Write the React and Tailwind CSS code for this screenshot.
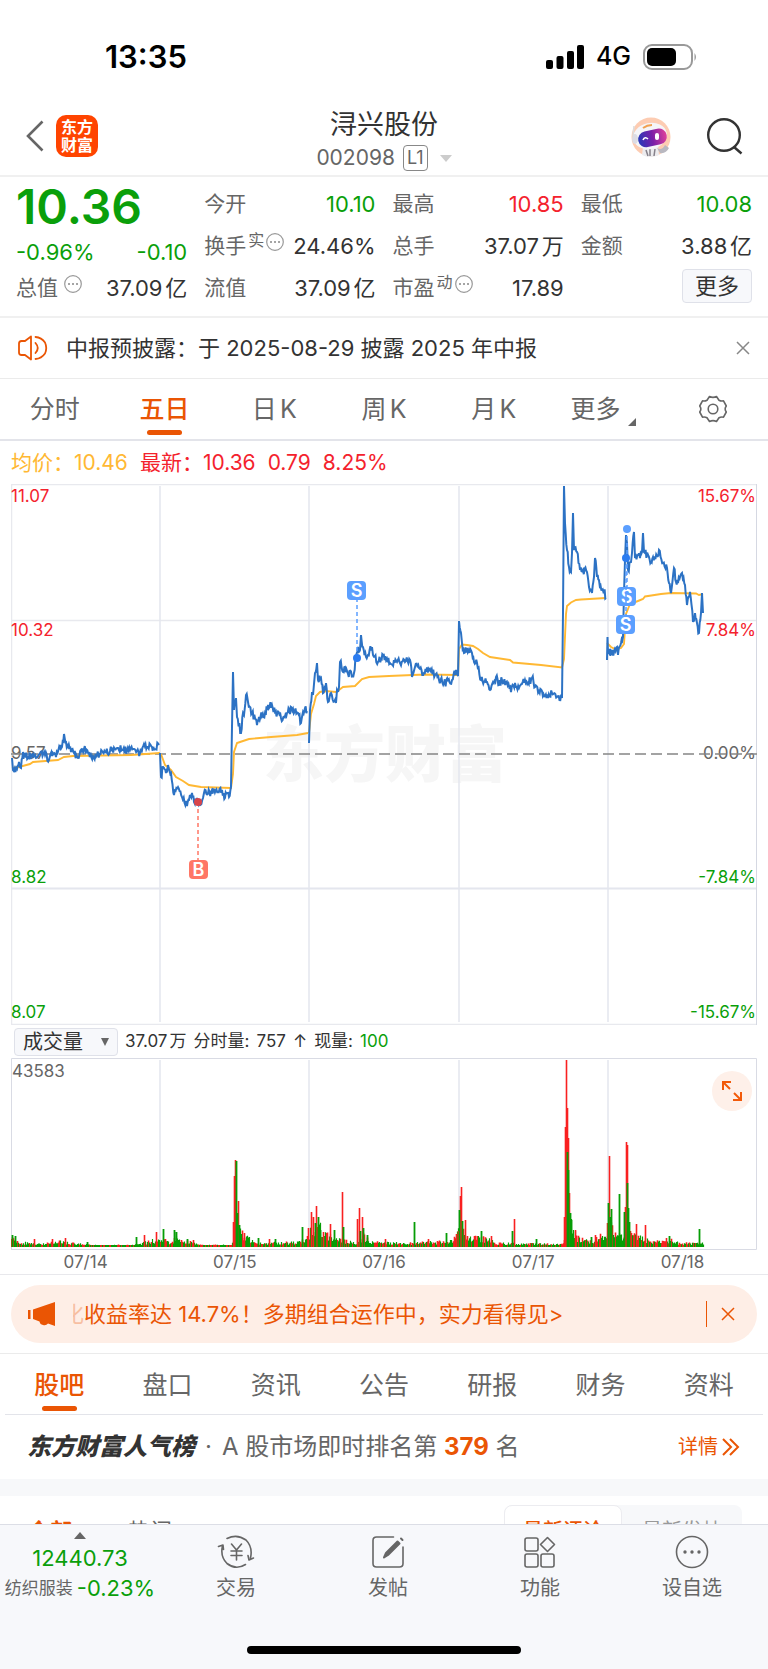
import React, { useState } from 'react';

const periods = ['分时', '五日', '日K', '周K', '月K', '更多'];
const sections = ['股吧', '盘口', '资讯', '公告', '研报', '财务', '资料'];

// price per trading day, [x, y] in chart units
const priceDays = [
    [[1, 274], [2, 286], [6, 285], [8, 278], [10, 284], [12, 268], [17, 274], [22, 269], [25, 274], [29, 269], [34, 271], [38, 276], [42, 269], [45, 273], [49, 264], [51, 263], [53, 250], [55, 258], [57, 263], [60, 268], [63, 269], [67, 274], [73, 265], [78, 269], [82, 272], [86, 271], [91, 267], [99, 267], [107, 264], [116, 267], [122, 265], [129, 269], [133, 260], [136, 263], [141, 263], [143, 265], [148, 261]],
    [[149, 269], [150, 293], [152, 283], [155, 289], [157, 281], [160, 289], [163, 311], [167, 303], [171, 313], [176, 322], [178, 316], [181, 309], [183, 318], [186, 314], [188, 321], [192, 314], [193, 309], [200, 308], [207, 308], [211, 306], [214, 314], [216, 309], [218, 313], [220, 303], [221, 243], [222, 188], [223, 226], [225, 214], [226, 233], [230, 249], [232, 229], [233, 231], [235, 211], [237, 218], [241, 229], [244, 234], [246, 241], [248, 233], [254, 229], [257, 221], [261, 221], [264, 228], [270, 234], [276, 229], [282, 225], [287, 229], [290, 239], [292, 228], [294, 224], [296, 227]],
    [[298, 259], [299, 226], [301, 208], [302, 211], [304, 189], [306, 179], [307, 196], [310, 194], [312, 209], [315, 199], [317, 218], [320, 209], [325, 219], [326, 206], [328, 203], [329, 178], [332, 188], [334, 183], [337, 190], [343, 189], [345, 173], [347, 163], [349, 166], [350, 151], [352, 163], [355, 173], [357, 171], [361, 163], [362, 171], [367, 178], [370, 175], [372, 171], [379, 179], [386, 178], [394, 178], [399, 176], [401, 193], [404, 183], [408, 184], [413, 189], [419, 185], [424, 191], [428, 196], [433, 199], [441, 196], [445, 186], [447, 192], [448, 137], [450, 149], [451, 159], [453, 169], [456, 164], [461, 169], [463, 178], [466, 179], [470, 196], [476, 198], [479, 206], [482, 198], [485, 193], [488, 201], [491, 196], [495, 198], [500, 208], [504, 199], [508, 204], [514, 196], [517, 199], [521, 194], [524, 203], [531, 207], [537, 214], [541, 209], [546, 213], [551, 214], [552, 129], [553, 2], [554, 39], [556, 66], [558, 83], [560, 88], [561, 69], [562, 29], [563, 66], [566, 68], [569, 86], [572, 86], [576, 88], [578, 103], [581, 109], [583, 93], [584, 74], [586, 93], [588, 96], [591, 106], [593, 106], [595, 114]],
    [[596, 176], [596.5, 153], [597, 168], [601, 169], [603, 168], [606, 163], [607, 171], [610, 159], [612, 153], [613, 109], [614, 76], [615, 51], [616, 59], [617, 86], [620, 78], [621, 69], [623, 48], [624, 74], [627, 71], [629, 74], [631, 68], [632, 49], [633, 68], [637, 71], [640, 78], [642, 73], [646, 72], [648, 66], [652, 79], [656, 84], [658, 99], [660, 109], [663, 84], [665, 98], [667, 99], [671, 89], [674, 101], [676, 121], [679, 108], [682, 138], [684, 129], [686, 139], [688, 149], [690, 129], [691, 109], [692, 129]],
];

const averageDays = [
    [[1, 284], [8, 283], [19, 280], [22, 278], [47, 276], [53, 273], [62, 272], [120, 271], [149, 269]],
    [[150, 270], [154, 281], [160, 286], [165, 293], [172, 297], [178, 301], [190, 303], [220, 304], [222, 290], [223, 268], [226, 259], [229, 258], [238, 255], [260, 253], [286, 251], [297, 249]],
    [[298, 249], [300, 230], [303, 220], [305, 212], [309, 208], [314, 207], [325, 208], [328, 206], [332, 203], [344, 202], [351, 195], [358, 193], [378, 192], [414, 190.5], [447, 191], [448, 165], [451, 160.5], [456, 161], [462, 162], [467, 165], [472, 169], [479, 173], [499, 176], [502, 178.5], [530, 181], [551, 183.5], [553, 175], [555, 130], [556, 122], [560, 118.5], [565, 116], [570, 115.5], [595, 114]],
    [[596, 159], [600, 163], [605, 165.5], [610, 164], [613, 160], [615, 130], [619, 120], [627, 117], [632, 115], [634, 112.5], [650, 110], [660, 109], [685, 109.5], [688, 111], [692, 110]],
];

// everyday volume level, and the bars which stand out of it
const volumeLevel = [[0, 9], [10, 5], [30, 3], [50, 6], [60, 4], [80, 2], [120, 2], [130, 4], [150, 9], [158, 5], [165, 9], [180, 5], [195, 2], [220, 2], [228, 18], [236, 10], [244, 4], [290, 5], [300, 18], [308, 22], [314, 13], [330, 7], [345, 5], [352, 12], [358, 6], [380, 4], [440, 6], [450, 20], [458, 10], [475, 9], [485, 4], [551, 3], [560, 25], [566, 10], [580, 6], [594, 14], [600, 25], [606, 12], [613, 14], [618, 22], [624, 12], [640, 6], [660, 7], [668, 4], [693, 4]];
const volumePeaks = [
    [1, 12, 'g'], [4, 11, 'g'], [23, 8, 'r'], [41, 8, 'r'], [54, 9, 'r'], [76, 5, 'g'], [125, 10, 'g'], [133, 12, 'r'], [145, 15, 'r'], [152, 18, 'g'], [163, 17, 'g'], [165, 15, 'g'], [176, 8, 'g'], [182, 7, 'r'],
    [222, 25, 'r'], [223, 71, 'r'], [224, 87, 'r'], [225, 86, 'g'], [226, 34, 'g'], [227, 46, 'r'], [228, 22, 'g'], [233, 14, 'r'], [247, 9, 'g'], [258, 8, 'r'], [264, 8, 'g'],
    [291, 20, 'g'], [297, 19, 'r'], [300, 35, 'r'], [302, 30, 'r'], [304, 24, 'g'], [305, 41, 'r'], [307, 30, 'g'], [309, 17, 'g'], [312, 15, 'r'], [319, 23, 'r'], [323, 17, 'g'], [331, 55, 'r'], [332, 20, 'g'], [346, 28, 'r'], [348, 39, 'r'], [349, 16, 'g'], [351, 30, 'r'], [352, 19, 'g'], [356, 12, 'g'],
    [374, 8, 'r'], [403, 25, 'g'], [417, 8, 'r'], [435, 14, 'g'], [445, 13, 'r'], [447, 16, 'r'], [449, 51, 'r'], [450, 60, 'r'], [448, 37, 'g'], [451, 26, 'g'], [454, 27, 'r'], [470, 16, 'g'], [480, 11, 'r'], [501, 16, 'g'], [503, 28, 'r'], [525, 8, 'g'],
    [553, 30, 'r'], [554, 120, 'r'], [555, 187, 'r'], [556, 139, 'r'], [557, 109, 'r'], [556, 95, 'g'], [557, 77, 'g'], [558, 54, 'r'], [559, 34, 'g'], [560, 27, 'g'], [564, 17, 'r'], [580, 10, 'g'], [584, 12, 'r'],
    [596, 24, 'r'], [598, 91, 'r'], [597, 44, 'g'], [599, 30, 'g'], [600, 38, 'g'], [608, 53, 'g'], [613, 35, 'g'], [614, 40, 'r'], [615, 105, 'r'], [616, 102, 'r'], [616, 64, 'g'], [617, 39, 'g'], [618, 25, 'g'], [625, 23, 'r'], [634, 22, 'r'], [655, 9, 'r'], [658, 11, 'g'], [688, 18, 'g'],
];

const makeRandom = (seed) => () => {
    seed = (seed * 1103515245 + 12345) % 2147483648;
    return seed / 2147483648;
};

const toPath = (points) => points.map(([x, y], i) => `${i ? 'L' : 'M'}${x.toFixed(1)} ${y.toFixed(1)}`).join('');

// fills the gaps between the known prices with small ticks
const withTicks = (points, random) => {
    const result = [points[0]];
    for (let i = 1; i < points.length; i++) {
        const [x0, y0] = points[i - 1];
        const [x1, y1] = points[i];
        const steps = Math.round((x1 - x0) / 0.8);
        for (let s = 1; s < steps; s++) {
            const t = s / steps;
            result.push([x0 + (x1 - x0) * t, y0 + (y1 - y0) * t + (random() - 0.5) * 8]);
        }
        result.push(points[i]);
    }
    return result;
};

const levelAt = (x) => {
    const i = volumeLevel.findIndex(([px]) => px > x);
    if (i < 1) return 4;
    const [x0, y0] = volumeLevel[i - 1];
    const [x1, y1] = volumeLevel[i];
    return y0 + ((y1 - y0) * (x - x0)) / (x1 - x0);
};

const tickRandom = makeRandom(11);
const pricePath = priceDays.map((day) => toPath(withTicks(day, tickRandom))).join('');
const averagePath = averageDays.map(toPath).join('');

const barRandom = makeRandom(5);
const volumeBars = [];
for (let x = 0; x < 693; x++) {
    const height = Math.max(2, levelAt(x) * (0.45 + barRandom() * 0.75));
    volumeBars.push([x, height, barRandom() > 0.4 ? 'g' : 'r']);
}
const barPath = (bars, color) =>
    bars.filter((bar) => bar[2] === color).map(([x, h]) => `M${x + 0.5} 189V${(189 - h).toFixed(1)}`).join('');

const Marker = ({ x, y, letter, dotX, dotY, dotColor, color }) => (
    <g>
        <path d={`M${dotX} ${dotY}V${dotY > y ? y + 19 : y}`} stroke={color} strokeWidth="1.5" strokeDasharray="4 3" />
        <circle cx={dotX} cy={dotY} r="4" fill={dotColor} />
        <rect x={x} y={y} width="19" height="19" rx="4" fill={color} />
        <text x={x + 9.5} y={y + 16} fontSize="18" fontWeight="600" fill="#fff" textAnchor="middle">{letter}</text>
    </g>
);

const PriceChart = () => (
    <svg viewBox="0 0 746 541" className="block h-auto w-full" fill="none">
        <text x="374" y="293" fontSize="61" fontWeight="900" fill="#f6f6f6" textAnchor="middle">东方财富</text>
        <path d="M0.5 540V0.5H746M0 136.5H746M0 540.5H746" stroke="#e8e9ee" strokeWidth="1.5" />
        <path d="M0 404.5H746" stroke="#e4e6ee" strokeWidth="2" />
        <path d="M149 2V538M298 2V538M448 2V538M597 2V538" stroke="#e4e6ee" strokeWidth="1.5" />
        <path d="M745.5 0V541" stroke="#d5d8e2" />
        <g fontSize="17">
            <g fill="#f4222d">
                <text x="0" y="18">11.07</text>
                <text x="0" y="152">10.32</text>
                <text x="745" y="18" textAnchor="end">15.67%</text>
                <text x="745" y="152" textAnchor="end">7.84%</text>
            </g>
            <g fill="#666">
                <text x="0" y="275">9.57</text>
                <text x="745" y="275" textAnchor="end">0.00%</text>
            </g>
            <g fill="#0a9f0a">
                <text x="0" y="399">8.82</text>
                <text x="0" y="534">8.07</text>
                <text x="745" y="399" textAnchor="end">-7.84%</text>
                <text x="745" y="534" textAnchor="end">-15.67%</text>
            </g>
        </g>
        <path d="M0 270H746" stroke="#858585" strokeWidth="1.5" strokeDasharray="11 5" />
        <path d={averagePath} stroke="#ffb833" strokeWidth="1.9" />
        <path d={pricePath} stroke="#2c72c4" strokeWidth="2" />
        <Marker x={336} y={97} letter="S" dotX={346} dotY={174} dotColor="#2b7cf0" color="#5b9fff" />
        <Marker x={606} y={103} letter="S" dotX={616} dotY={45} dotColor="#5b9fff" color="#5b9fff" />
        <Marker x={605} y={131} letter="S" dotX={615} dotY={74} dotColor="#2b7cf0" color="#5b9fff" />
        <Marker x={178} y={376} letter="B" dotX={187} dotY={318} dotColor="#d8454b" color="#ff7766" />
    </svg>
);

const VolumeChart = () => (
    <svg viewBox="0 0 746 192" className="block h-auto w-full" fill="none">
        <path d="M149 2V189M298 2V189M448 2V189M597 2V189" stroke="#e4e6ee" strokeWidth="1.5" />
        <path d="M0.5 191V0.5H745.5V191.5H0" stroke="#d9dbe4" />
        <text x="1" y="19" fontSize="17" fill="#666">43583</text>
        <path d={barPath(volumeBars, 'r')} stroke="#f92020" strokeWidth="1.6" />
        <path d={barPath(volumeBars, 'g')} stroke="#069d06" strokeWidth="1.2" />
        <path d={barPath(volumePeaks, 'r')} stroke="#f92020" strokeWidth="1.6" />
        <path d={barPath(volumePeaks, 'g')} stroke="#069d06" strokeWidth="1.8" />
    </svg>
);

const InfoDot = () => (
    <svg viewBox="0 0 18 18" className="size-[18px]" fill="none">
        <circle cx="9" cy="9" r="8.3" stroke="#999" strokeWidth="1.2" />
        <path d="M5 9h.01M9 9h.01M13 9h.01" stroke="#888" strokeWidth="2" strokeLinecap="round" />
    </svg>
);

const Robot = () => (
    <svg viewBox="0 0 60 60" className="size-[60px]">
        <defs>
            <linearGradient id="visor" x1="0" y1="0" x2="1" y2="0">
                <stop offset="0" stopColor="#2838b8" />
                <stop offset="0.5" stopColor="#7a1fa8" />
                <stop offset="1" stopColor="#e0409a" />
            </linearGradient>
        </defs>
        <circle cx="29" cy="31" r="19.5" fill="#fdccb2" />
        <path d="M21 41l-1 8q8 4 17 0l-1-9z" fill="#ececef" />
        <path d="M24 44l2 6M33 43l-1 7M28 42v8" stroke="#86818a" strokeWidth="1.5" />
        <path d="M35 42q5 3 8-3l4 3q-3 6-9 5z" fill="#b9b8c0" />
        <ellipse cx="28" cy="30" rx="17" ry="13" transform="rotate(-12 28 30)" fill="#f5f5f8" />
        <ellipse cx="13" cy="33" rx="3" ry="5" fill="#dcdce4" />
        <path d="M11 30L12 20" stroke="#ddd" strokeWidth="1.5" />
        <path d="M21 22q4-3 9-3" stroke="#f0a050" strokeWidth="2" fill="none" />
        <rect x="16" y="24" width="29" height="16" rx="8" transform="rotate(-12 30 32)" fill="url(#visor)" />
        <path d="M21 34q2-4 5-1" stroke="#fff" strokeWidth="1.6" fill="none" />
        <rect x="33" y="27" width="4" height="7" rx="2" fill="#fff" />
    </svg>
);

const TabBar = ({ active, children, onClick }) => (
    <button onClick={onClick} className="flex flex-1 flex-col items-center">
        <span className={`flex items-end text-[25px] leading-[42px] ${active ? 'font-medium text-[#ea5504]' : 'text-[#666]'}`}>
            {children}
        </span>
        <span className={`h-[5px] w-[35px] rounded-full ${active ? 'bg-[#ea5504]' : ''}`} />
    </button>
);

const Cell = ({ label, sup, info, value, color = 'text-[#333]' }) => (
    <div className="flex h-[42px] items-center justify-between">
        <span className="flex items-center text-[21px] text-[#666]">
            {label}
            {sup && <span className="mb-3 ml-0.5 text-base">{sup}</span>}
            {info && <span className="mb-2 ml-0.5"><InfoDot /></span>}
        </span>
        <span className={`text-[22px] ${color}`}>{value}</span>
    </div>
);

const NavItem = ({ label, children }) => (
    <button className="flex flex-1 flex-col items-center pt-2.5 text-xl leading-[30px] text-[#666]">
        <svg viewBox="0 0 38 34" className="mb-1 h-[34px] w-[38px]" fill="none" stroke="#666" strokeWidth="1.6" strokeLinecap="round" strokeLinejoin="round">
            {children}
        </svg>
        {label}
    </button>
);

const App = () => {
    const [period, setPeriod] = useState('五日');
    const [section, setSection] = useState('股吧');
    const [showNotice, setShowNotice] = useState(true);
    const [showBanner, setShowBanner] = useState(true);

    return (
        <div className="flex h-screen flex-col overflow-hidden bg-white font-['Inter','Noto_Sans_CJK_SC',sans-serif] text-[#333] [text-autospace:normal]">
            {/* Status bar */}
            <div className="flex h-24 shrink-0 items-center justify-between pt-[18px] pr-[70px] pl-[105px]">
                <span className="text-[31px] font-semibold text-black">13:35</span>
                <div className="flex items-center gap-3">
                    <svg viewBox="0 0 38 24" className="h-6 w-[38px]" fill="#000">
                        <rect x="0" y="15" width="7" height="9" rx="2" />
                        <rect x="10.500" y="11" width="7" height="13" rx="2" />
                        <rect x="21" y="6" width="7" height="18" rx="2" />
                        <rect x="31" y="0" width="7" height="24" rx="2" />
                    </svg>
                    <span className="text-[25px] font-medium text-black">4G</span>
                    <svg viewBox="0 0 55 26" className="h-[26px] w-[55px]" fill="none">
                        <rect x="1" y="1" width="48" height="24" rx="8" stroke="#999" strokeWidth="2" />
                        <rect x="4" y="4" width="29" height="18" rx="5" fill="#000" />
                        <path d="M51.500 9q3 4 0 8z" fill="#999" />
                    </svg>
                </div>
            </div>

            {/* Header */}
            <header className="flex h-[81px] shrink-0 items-center border-b-2 border-[#f0f0f0] pr-6 pl-6">
                <div className="flex flex-1 items-center gap-3">
                    <button aria-label="返回">
                        <svg viewBox="0 0 20 32" className="h-8 w-5" fill="none" stroke="#666" strokeWidth="2.6">
                            <path d="M18.500 1.500L4 16l14.500 14.500" />
                        </svg>
                    </button>
                    <a href="#home" className="flex h-[42px] w-[42px] flex-col items-center justify-center rounded-[10px] bg-[#ff4400] text-base leading-[18px] font-bold text-white">
                        <span>东方</span>
                        <span>财富</span>
                    </a>
                </div>
                <div className="flex flex-col items-center gap-px pt-2">
                    <h1 className="text-[27px] leading-9">浔兴股份</h1>
                    <button className="flex items-center gap-2 text-[21px] leading-7 text-[#666]">
                        002098
                        <span className="rounded border border-[#888] px-[3px] text-lg leading-6">L1</span>
                        <svg viewBox="0 0 12 7" className="ml-1 h-[7px] w-3" fill="#ccc"><path d="M0 0h12L6 7z" /></svg>
                    </button>
                </div>
                <div className="flex flex-1 items-center justify-end gap-6">
                    <button aria-label="智能助手"><Robot /></button>
                    <button aria-label="搜索">
                        <svg viewBox="0 0 38 38" className="size-[38px]" fill="none" stroke="#333" strokeWidth="2.4">
                            <circle cx="18" cy="18" r="15.800" />
                            <path d="M28 30l7.500 6.500" />
                        </svg>
                    </button>
                </div>
            </header>

            <main className="min-h-0 flex-1 overflow-hidden">
                {/* Quote */}
                <section className="grid grid-cols-4 gap-[17px] border-b-2 border-[#f0f0f0] px-4 pt-1.5 pb-[7px]">
                    <div className="text-[#0a9f0a]">
                        <div className="text-5xl leading-[48px] font-semibold">10.36</div>
                        <div className="flex h-[42px] items-center justify-between text-[22px]">
                            <span>-0.96%</span>
                            <span>-0.10</span>
                        </div>
                        <div className="flex h-[30px] items-center justify-between">
                            <span className="flex items-center gap-1.5 text-[21px] text-[#666]">
                                总值
                                <span className="mb-2"><InfoDot /></span>
                            </span>
                            <span className="text-[22px] text-[#333]">37.09亿</span>
                        </div>
                    </div>
                    <div>
                        <Cell label="今开" value="10.10" color="text-[#0a9f0a]" />
                        <Cell label="换手" sup="实" info value="24.46%" />
                        <Cell label="流值" value="37.09亿" />
                    </div>
                    <div>
                        <Cell label="最高" value="10.85" color="text-[#f4222d]" />
                        <Cell label="总手" value="37.07万" />
                        <Cell label="市盈" sup="动" info value="17.89" />
                    </div>
                    <div>
                        <Cell label="最低" value="10.08" color="text-[#0a9f0a]" />
                        <Cell label="金额" value="3.88亿" />
                        <div className="flex justify-end pt-0.5">
                            <button className="h-[34px] rounded border border-[#dfe1e9] bg-[#f7f8fb] px-3 text-[22px] leading-8">更多</button>
                        </div>
                    </div>
                </section>

                {/* Notice */}
                {showNotice && (
                    <div className="flex h-[61px] items-center border-b border-[#ebebeb] px-[18px]">
                        <svg viewBox="0 0 30 26" className="mr-[18px] h-[26px] w-[30px]" fill="none" stroke="#ea5504" strokeWidth="1.8" strokeLinejoin="round" strokeLinecap="round">
                            <path d="M13 1.500L7 6H3.500Q1 6 1 8.500v9Q1 20 3.500 20H7l6 4.500z" />
                            <path d="M17.500 8q4.500 5 0 10M17.500 2q6 .5 9.500 5.500 2.500 5.500 0 11-3.500 5-9.500 5.500" />
                        </svg>
                        <p className="flex-1 text-[22px]">中报预披露：于 2025-08-29 披露 2025 年中报</p>
                        <button aria-label="关闭公告" onClick={() => setShowNotice(false)}>
                            <svg viewBox="0 0 14 14" className="size-3.5" stroke="#888" strokeWidth="1.5"><path d="M1 1l12 12M13 1L1 13" /></svg>
                        </button>
                    </div>
                )}

                {/* Period tabs */}
                <div className="flex border-b-2 border-[#e3e4ea] pt-[9px] pb-1">
                    {periods.map((name) => (
                        <TabBar key={name} active={period === name} onClick={() => setPeriod(name)}>
                            {name}
                            {name === '更多' && (
                                <svg viewBox="0 0 8 8" className="mb-1 ml-2 size-2" fill="#666"><path d="M8 0v8H0z" /></svg>
                            )}
                        </TabBar>
                    ))}
                    <button aria-label="设置" className="flex flex-1 justify-center pt-[7px]">
                        <svg viewBox="0 0 28 28" className="size-7" fill="none" stroke="#666" strokeWidth="1.6" strokeLinejoin="round">
                            <path d="M10.500 1.500Q14 3.200 17.500 1.500L20 5.200Q22 6.300 24.500 5.800L27.300 11Q25 14 27.300 17L24.500 22.200Q22 21.700 20 22.800L17.500 26.500Q14 24.800 10.500 26.500L8 22.800Q6 21.700 3.500 22.200L.7 17Q3 14 .7 11L3.500 5.800Q6 6.300 8 5.200z" />
                            <circle cx="14" cy="14" r="4.800" />
                        </svg>
                    </button>
                </div>

                {/* Price chart */}
                <div className="flex h-[43px] items-center gap-3 px-[11px] text-[21px] text-[#f4222d]">
                    <span className="text-[#ffb833]">均价：10.46</span>
                    <span>最新：10.36</span>
                    <span>0.79</span>
                    <span>8.25%</span>
                </div>
                <div className="px-[11px]"><PriceChart /></div>

                {/* Volume chart */}
                <div className="flex h-[33px] items-center gap-[7px] px-3.5 text-[17px]">
                    <button className="flex h-7 w-[104px] items-center justify-between rounded border border-[#dfe1e9] bg-[#f7f8fb] pr-2 pl-2 text-xl">
                        成交量
                        <svg viewBox="0 0 8 8" className="size-2" fill="#666"><path d="M0 0h8L4 8z" /></svg>
                    </button>
                    <span>37.07万</span>
                    <span>分时量:</span>
                    <span>757</span>
                    <span>↑</span>
                    <span>现量:</span>
                    <span className="text-[#0a9f0a]">100</span>
                </div>
                <div className="relative px-[11px]">
                    <VolumeChart />
                    <button aria-label="放大" className="absolute top-[13px] right-4 flex size-10 items-center justify-center rounded-full bg-[#fef0e9]">
                        <svg viewBox="0 0 20 20" className="size-5" fill="none" stroke="#f25a0a" strokeWidth="2">
                            <path d="M9 1H1v8M1 1l7 7M11 19h8v-8M19 19l-7-7" />
                        </svg>
                    </button>
                </div>
                <div className="border-b border-[#e8e8ec] px-[11px]">
                    <div className="flex h-6 text-center text-[17px] text-[#666]">
                        {['07/14', '07/15', '07/16', '07/17', '07/18'].map((date) => (
                            <span key={date} className="flex-1">{date}</span>
                        ))}
                    </div>
                </div>

                {/* Promo banner */}
                {showBanner && (
                    <div className="border-b border-[#ebebeb] px-[11px] py-2.5">
                        <div className="flex h-[58px] items-center rounded-full bg-[#feeee6] pr-[22px] pl-[17px] text-[#ea5504]">
                            <svg viewBox="0 0 28 24" className="mr-[17px] h-6 w-7" fill="#ea5504">
                                <path d="M0 8h2.500v9H0zM5 7.500L27 0v24l-7-2.500q-2 2.500-5 1.500-3-.5-3.500-3.500L5 17z" />
                            </svg>
                            <div className="flex flex-1 justify-start overflow-hidden">
                                <span className="flex w-[11px] shrink-0 justify-end overflow-hidden text-[22px] opacity-30">化</span>
                                <a href="#promo" className="whitespace-nowrap text-[22px]">收益率达 14.7%！多期组合运作中，实力看得见&gt;</a>
                            </div>
                            <span className="mr-3.5 h-[26px] w-px bg-[#ea5504]" />
                            <button aria-label="关闭推广" onClick={() => setShowBanner(false)}>
                                <svg viewBox="0 0 14 14" className="size-3.5" stroke="#ea5504" strokeWidth="1.5"><path d="M1 1l12 12M13 1L1 13" /></svg>
                            </button>
                        </div>
                    </div>
                )}

                {/* Section tabs */}
                <div className="mx-[5px] flex border-b border-[#e3e4ea] pt-2.5 pb-[3px]">
                    {sections.map((name) => (
                        <TabBar key={name} active={section === name} onClick={() => setSection(name)}>{name}</TabBar>
                    ))}
                </div>

                {/* Popularity rank */}
                <div className="flex h-16 items-center pr-7 pl-[27px] text-2xl text-[#666]">
                    <strong className="font-black text-[#333] italic">东方财富人气榜</strong>
                    <span className="mx-2.5">·</span>
                    <span>A 股市场即时排名第 <b className="font-bold text-[#ea5504]">379</b> 名</span>
                    <a href="#rank" className="ml-auto flex items-center gap-1 text-xl text-[#ea5504]">
                        详情
                        <svg viewBox="0 0 18 18" className="size-[18px]" fill="none" stroke="#ea5504" strokeWidth="2"><path d="M1 1l8 8-8 8M8 1l8 8-8 8" /></svg>
                    </a>
                </div>
                <div className="h-[17px] bg-[#f7f8fa]" />

                {/* Post filters */}
                <div className="flex items-start justify-between pt-[9px] pr-[26px] pl-7">
                    <div className="flex gap-14 pt-2.5 text-[22px] leading-8">
                        <button className="font-bold text-[#ea5504]">全部</button>
                        <button className="text-[#666]">热门</button>
                    </div>
                    <div className="flex rounded-lg bg-[#f7f8fa] text-xl leading-[50px]">
                        <button className="rounded-lg border border-[#ececf0] bg-white px-[18px] font-medium text-[#ea5504]">最新评论</button>
                        <button className="px-5 text-[#999]">最新发帖</button>
                    </div>
                </div>
            </main>

            {/* Bottom bar */}
            <footer className="flex h-[145px] shrink-0 flex-col justify-between border-t border-[#dcdee6] bg-[#f7f8fb] pb-[15px]">
                <nav className="flex pl-1">
                    <button className="flex flex-1 flex-col items-center pt-[7px] pr-1 text-[22px] leading-[30px] text-[#0a9f0a]">
                        <svg viewBox="0 0 12 7" className="mb-1 h-[7px] w-3" fill="#666"><path d="M6 0l6 7H0z" /></svg>
                        <span>12440.73</span>
                        <span className="flex items-center gap-1 whitespace-nowrap">
                            <span className="text-[17px] text-[#666]">纺织服装</span>
                            -0.23%
                        </span>
                    </button>
                    <NavItem label="交易">
                        <path d="M10 3.500Q20-1.500 29 5q7 7 4.500 18M31 20.500l1 4.500 4.500-2M28.500 29.500Q19 35.500 10 28.500q-7-7-4.500-17.500M6.500 14.500L6 10l-4.500 1.500M14.500 9l5 6 5-6M19.500 15v10M14 16h11M14 20.500h11" />
                    </NavItem>
                    <NavItem label="发帖">
                        <path d="M24.500 2H7.500Q4 2 4 5.500v23Q4 32 7.500 32h23q3.500 0 3.500-3.500V12" />
                        <path d="M15 22.500L17 18 28.500 6.500l2 2L19 20zM32 3.500l1.500 1.500" fill="#666" strokeWidth="2" />
                    </NavItem>
                    <NavItem label="功能">
                        <rect x="4" y="3" width="13" height="13" rx="2" />
                        <rect x="4" y="19" width="13" height="13" rx="2" />
                        <rect x="20" y="19" width="13" height="13" rx="2" />
                        <path d="M26.500 2.500l7 7-7 7-7-7z" />
                    </NavItem>
                    <NavItem label="设自选">
                        <circle cx="19" cy="17" r="15.500" />
                        <path d="M12 17h.01M19 17h.01M26 17h.01" strokeWidth="3.4" />
                    </NavItem>
                </nav>
                <div className="mx-auto h-2 w-[274px] rounded-full bg-black" />
            </footer>
        </div>
    );
};

export default App;
